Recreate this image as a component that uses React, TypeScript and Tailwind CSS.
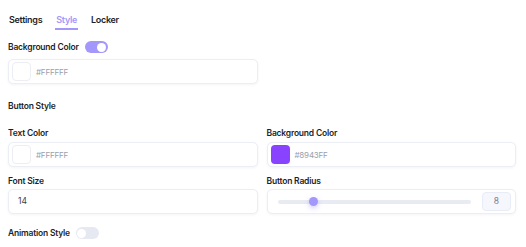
import { useState } from 'react'

function Toggle({ on }: { on: boolean }) {
  return (
    <span
      className={`relative inline-flex h-[12px] w-[23px] items-center rounded-full ${
        on ? 'bg-[#a497fb]' : 'bg-[#e6e9f2]'
      }`}
    >
      <span
        className={`absolute top-[1.5px] h-[9px] w-[9px] rounded-full bg-white ${
          on ? 'left-[12.5px]' : 'left-[1.5px]'
        }`}
      />
    </span>
  )
}

function ColorInput({ color, value }: { color: string; value: string }) {
  return (
    <div className="flex h-[25px] items-center gap-[5px] rounded-[5px] border border-[#eceef6] bg-white pl-[3px] shadow-[0_1px_3px_rgba(30,40,90,0.05)]">
      <div
        className={`h-[19px] w-[19px] rounded-[4px] ${
          color === '#FFFFFF' ? 'border border-[#eceef4] bg-white' : 'bg-[#8943FF]'
        }`}
      />
      <span className="text-[8px] tracking-[-0.2px] text-[#9a9eaa]">{value}</span>
    </div>
  )
}

function Label({ children }: { children: React.ReactNode }) {
  return (
    <div className="text-[8.5px] font-semibold leading-[12px] tracking-[-0.2px] text-[#1c1f2a]">
      {children}
    </div>
  )
}

export default function App() {
  const [tab] = useState('Style')

  return (
    <div className="h-[247px] w-[526px] overflow-hidden bg-white pl-2 pr-[10px] font-['Inter',sans-serif] text-[#1c1f2a]">
      <div className="flex gap-[12px] pt-[14px] text-[9px] font-semibold leading-[12px] tracking-[-0.3px]">
        {['Settings', 'Style', 'Locker'].map((t) => (
          <div key={t} className="flex flex-col items-center">
            <span className={`px-[1px] ${t === tab ? 'text-[#a497fb]' : ''}`}>{t}</span>
            <span
              className={`mt-[2px] h-[2px] w-full ${t === tab ? 'bg-[#a497fb]' : 'bg-transparent'}`}
            />
          </div>
        ))}
      </div>

      <div className="mt-[11px] flex items-center gap-[6px]">
        <Label>Background Color</Label>
        <Toggle on />
      </div>
      <div className="mt-[6px] w-[250px]">
        <ColorInput color="#FFFFFF" value="#FFFFFF" />
      </div>

      <div className="mt-[16px] text-[8.5px] font-semibold leading-[12px] tracking-[-0.2px]">
        Button Style
      </div>

      <div className="mt-[15px] grid grid-cols-2 gap-x-[9px]">
        <div>
          <Label>Text Color</Label>
          <div className="mt-[3px]">
            <ColorInput color="#FFFFFF" value="#FFFFFF" />
          </div>
        </div>
        <div>
          <Label>Background Color</Label>
          <div className="mt-[3px]">
            <ColorInput color="#8943FF" value="#8943FF" />
          </div>
        </div>

        <div className="mt-[8px]">
          <Label>Font Size</Label>
          <div className="mt-[2px] flex h-[25px] items-center rounded-[5px] border border-[#eceef6] bg-white pl-[9px] text-[8.5px] text-[#3a3f4c] shadow-[0_1px_3px_rgba(30,40,90,0.05)]">
            14
          </div>
        </div>
        <div className="mt-[8px]">
          <Label>Button Radius</Label>
          <div className="mt-[2px] flex h-[25px] items-center gap-[11px] rounded-[5px] border border-[#eceef6] bg-white pl-[10px] pr-[4px] shadow-[0_1px_3px_rgba(30,40,90,0.05)]">
            <div className="relative h-[4px] flex-1 rounded-full bg-[#e9ebf3]">
              <span className="absolute left-[31px] top-[-2.5px] h-[9px] w-[9px] rounded-full bg-[#a497fb] shadow-[0_2px_5px_rgba(120,110,220,0.35)]" />
            </div>
            <div className="flex h-[19px] w-[29px] items-center justify-center rounded-[4px] border border-[#e8ecf6] bg-[#f5f7fd] text-[8.5px] text-[#7a7f8c]">
              8
            </div>
          </div>
        </div>
      </div>

      <div className="mt-[13px] flex items-center gap-[6px]">
        <Label>Animation Style</Label>
        <Toggle on={false} />
      </div>
    </div>
  )
}
